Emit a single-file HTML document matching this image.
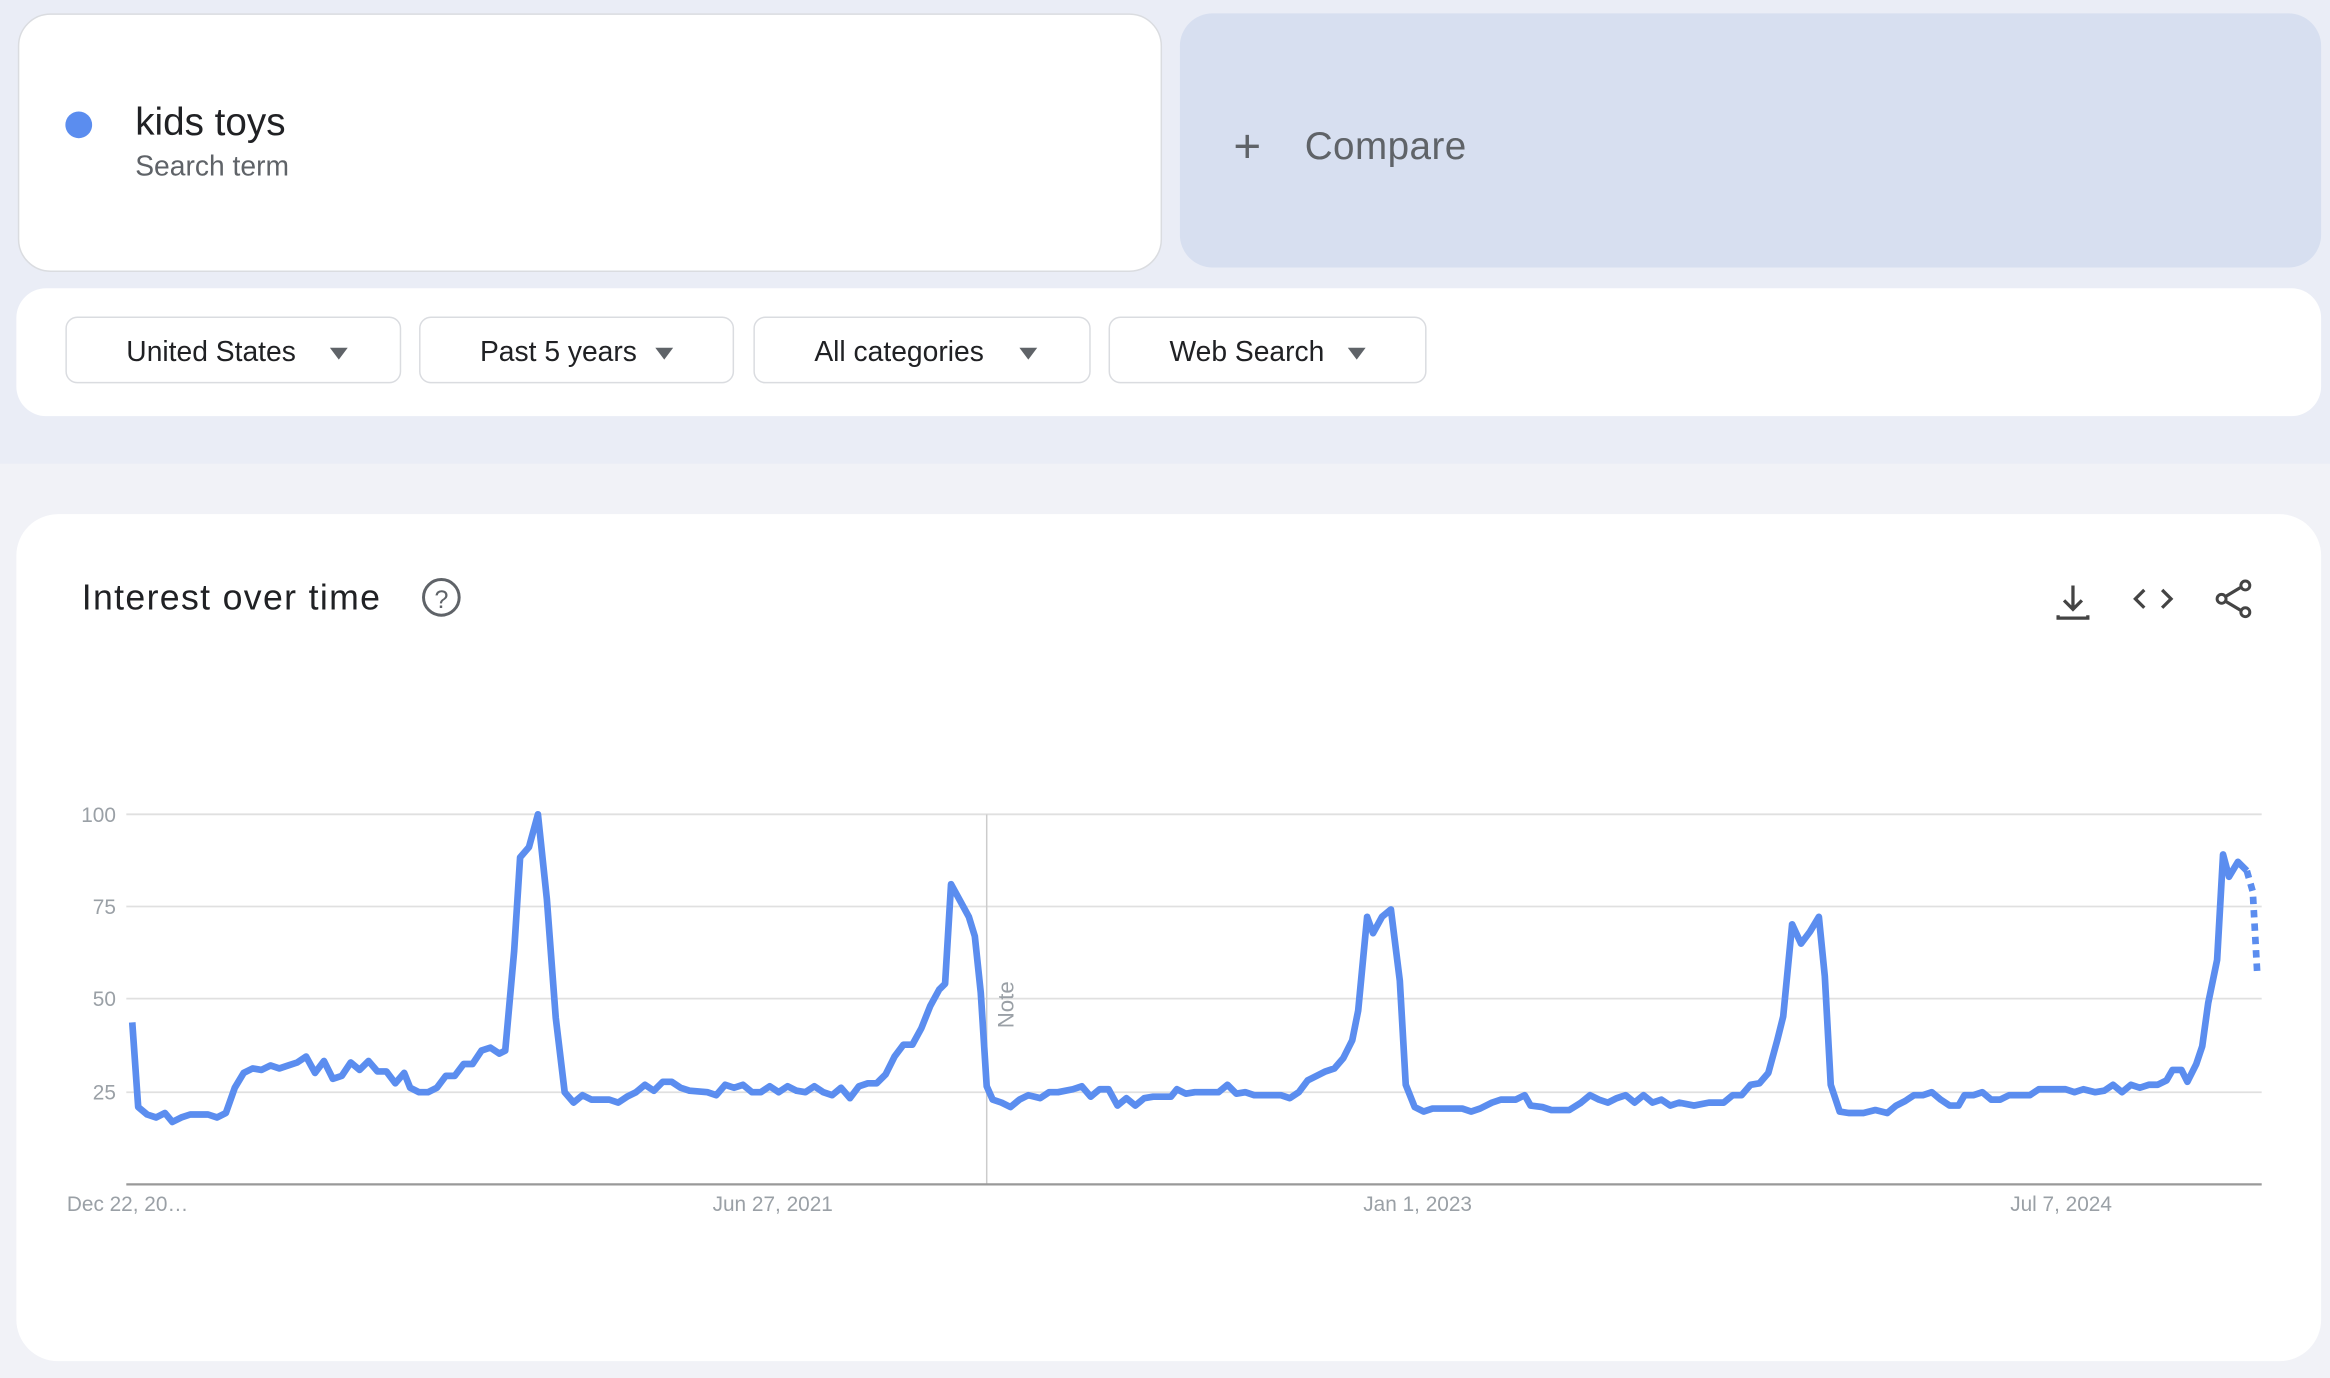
<!DOCTYPE html>
<html><head><meta charset="utf-8"><style>
html,body{margin:0;padding:0;width:2330px;height:1378px;overflow:hidden;background:#f1f2f7;font-family:"Liberation Sans",Arial,sans-serif}
#w{position:absolute;left:0;top:0;width:1568px;height:927px;transform:scale(1.486);transform-origin:0 0;background:#f1f2f7}
.top{position:absolute;left:0;top:0;width:1568px;height:312px;background:#eaedf6}
.card{position:absolute;background:#fff}
.dd{position:absolute;top:213px;height:45px;border:1px solid #dadce0;border-radius:8px;background:#fff;font-size:19px;color:#202124;line-height:47px;box-sizing:border-box;padding-left:40px}
.dd i{position:absolute;top:20px;width:0;height:0;border-left:6px solid transparent;border-right:6px solid transparent;border-top:8px solid #5f6368}
</style></head><body><div id="w">
<div class="top"></div>
<div class="card" style="left:12px;top:9px;width:768px;height:172px;border:1px solid #dadce0;border-radius:22px"></div>
<div style="position:absolute;left:44px;top:75px;width:18px;height:18px;border-radius:50%;background:#5b8def"></div>
<div style="position:absolute;left:91px;top:67px;font-size:26px;color:#202124">kids toys</div>
<div style="position:absolute;left:91px;top:102px;font-size:19px;color:#5f6368">Search term</div>
<div style="position:absolute;left:794px;top:9px;width:768px;height:171px;background:#d7dff0;border-radius:22px"></div>
<div style="position:absolute;left:830px;top:80px;font-size:32px;color:#5f6368;font-weight:300;line-height:36px">+</div>
<div style="position:absolute;left:878px;top:83px;font-size:26px;color:#5f6368;letter-spacing:0.3px">Compare</div>
<div class="card" style="left:11px;top:194px;width:1551px;height:86px;border-radius:20px"></div>
<div class="dd" style="left:44px;width:226px">United States<i style="left:177px"></i></div>
<div class="dd" style="left:282px;width:212px">Past 5 years<i style="left:158px"></i></div>
<div class="dd" style="left:507px;width:227px">All categories<i style="left:178px"></i></div>
<div class="dd" style="left:746px;width:214px">Web Search<i style="left:160px"></i></div>
<div class="card" style="left:11px;top:346px;width:1551px;height:570px;border-radius:28px"></div>
<div style="position:absolute;left:55px;top:389px;font-size:24px;color:#202124;letter-spacing:0.9px">Interest over time</div>
<svg style="position:absolute;left:0;top:0" width="1568" height="927">
<circle cx="297" cy="402" r="12" fill="none" stroke="#5f6368" stroke-width="2"/>
<text x="297" y="409" font-size="17" text-anchor="middle" fill="#5f6368" font-family="Liberation Sans">?</text>
<g stroke="#444" stroke-width="2.2" fill="none">
<path d="M1395 394v16M1389 404l6 6 6-6M1385 414v2h20v-2"/>
<path d="M1443 397l-6 6 6 6M1455 397l6 6-6 6"/>
<path d="M1510 394l-15 9 15 9"/>
</g>
<g fill="#fff" stroke="#444" stroke-width="2"><circle cx="1511" cy="394" r="3"/><circle cx="1495" cy="403" r="3"/><circle cx="1511" cy="412" r="3"/></g>
<g stroke="#e0e0e0" stroke-width="1.2"><line x1="85" y1="548" x2="1522" y2="548"/><line x1="85" y1="610" x2="1522" y2="610"/><line x1="85" y1="672" x2="1522" y2="672"/><line x1="85" y1="735" x2="1522" y2="735"/></g>
<line x1="664" y1="548" x2="664" y2="797" stroke="#ccc" stroke-width="1"/>
<line x1="85" y1="797" x2="1522" y2="797" stroke="#999" stroke-width="1.5"/>
<g font-size="14" fill="#9aa0a6" font-family="Liberation Sans">
<text x="78" y="553" text-anchor="end">100</text><text x="78" y="615" text-anchor="end">75</text><text x="78" y="677" text-anchor="end">50</text><text x="78" y="740" text-anchor="end">25</text>
<text x="45" y="815">Dec 22, 20…</text><text x="520" y="815" text-anchor="middle">Jun 27, 2021</text><text x="954" y="815" text-anchor="middle">Jan 1, 2023</text><text x="1387" y="815" text-anchor="middle">Jul 7, 2024</text>
<text transform="translate(682 692) rotate(-90)" font-size="15">Note</text>
</g>
<polyline fill="none" stroke="#5b8def" stroke-width="4.5" stroke-linejoin="round" points="89,688 93,745 99,750 105,752 111,749 116,755 122,752 128,750 134,750 140,750 146,752 152,749 158,732 164,722 170,719 176,720 182,717 188,719 194,717 200,715 206,711 212,722 218,714 224,726 230,724 236,715 242,720 248,714 254,721 260,721 266,729 272,722 276,732 282,735 288,735 294,732 300,724 306,724 312,716 318,716 324,707 330,705 336,709 340,707 346,640 350,577 356,570 362,548 368,605 374,685 380,735 386,742 392,737 398,740 410,740 416,742 422,738 428,735 434,730 440,734 446,728 452,728 458,732 464,734 476,735 482,737 488,730 494,732 500,730 506,735 512,735 518,731 524,735 530,731 536,734 542,735 548,731 554,735 560,737 566,732 572,739 578,731 584,729 590,729 596,723 602,711 608,703 614,703 620,692 626,677 632,666 636,662 640,595 646,606 652,617 656,630 660,668 664,731 668,740 674,742 680,745 686,740 692,737 700,739 706,735 712,735 722,733 728,731 734,738 740,733 746,733 752,744 758,739 764,744 770,739 776,738 788,738 792,733 798,736 804,735 812,735 820,735 826,730 832,736 838,735 844,737 850,737 862,737 868,739 874,735 880,727 886,724 892,721 898,719 904,712 910,700 914,680 920,617 924,628 930,617 936,612 942,660 946,730 952,745 958,748 964,746 984,746 990,748 996,746 1004,742 1010,740 1020,740 1026,737 1030,744 1038,745 1044,747 1056,747 1064,742 1070,737 1076,740 1082,742 1088,739 1094,737 1100,742 1106,737 1112,742 1118,740 1124,744 1130,742 1140,744 1150,742 1160,742 1166,737 1172,737 1178,730 1184,729 1190,722 1196,700 1200,684 1206,622 1212,635 1218,627 1224,617 1228,657 1232,730 1238,748 1244,749 1254,749 1262,747 1270,749 1276,744 1282,741 1288,737 1294,737 1300,735 1306,740 1312,744 1318,744 1322,737 1328,737 1334,735 1340,740 1346,740 1352,737 1366,737 1372,733 1390,733 1396,735 1402,733 1410,735 1416,734 1422,730 1428,735 1434,730 1440,732 1446,730 1452,730 1458,727 1462,720 1468,720 1472,728 1478,716 1482,704 1486,675 1492,646 1496,575 1500,590 1506,580 1512,586"/>
<polyline fill="none" stroke="#5b8def" stroke-width="4.5" stroke-dasharray="5 4" points="1512,586 1516,600 1519,655"/>
</svg>
</div></body></html>
